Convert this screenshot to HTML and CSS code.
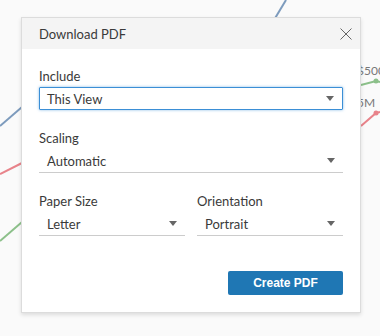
FILE: index.html
```html
<!DOCTYPE html>
<html lang="en">
<head>
    <meta charset="UTF-8">
    <meta name="viewport" content="width=device-width, initial-scale=1.0">
    <title>Download PDF</title>
    <link rel="stylesheet" href="styles.css">
</head>
<body>
    <!-- chart behind the dialog -->
    <svg class="chart" width="380" height="336" viewBox="0 0 380 336">
        <polyline points="286,0 274,20" stroke="#7d9bbd" stroke-width="2" fill="none"/>
        <polyline points="0,126 22,107" stroke="#7d9bbd" stroke-width="2" fill="none"/>
        <polyline points="0,174 22,163" stroke="#e8838a" stroke-width="2" fill="none"/>
        <polyline points="0,241 22,222" stroke="#8cc08a" stroke-width="2" fill="none"/>
        <polyline points="361,85 376,81 380,82" stroke="#8cc08a" stroke-width="2" fill="none"/>
        <circle cx="376" cy="81" r="2.5" fill="#8cc08a"/>
        <polyline points="361,126 376,113 380,112" stroke="#e8838a" stroke-width="2" fill="none"/>
        <circle cx="376" cy="113" r="2.5" fill="#e8838a"/>
        <text x="357" y="75" class="chart-label">$500</text>
        <text x="357" y="107" class="chart-label">5M</text>
    </svg>

    <div class="dialog">
        <div class="dialog-header">
            <span class="dialog-title">Download PDF</span>
            <svg class="close" width="12" height="12" viewBox="0 0 12 12">
                <path d="M0.5 0.5 L11.5 11.5 M11.5 0.5 L0.5 11.5" stroke="#666" stroke-width="1" fill="none"/>
            </svg>
        </div>
        <div class="dialog-body">
            <div class="field">
                <label>Include</label>
                <div class="select boxed">
                    <span>This View</span>
                    <span class="arrow"></span>
                </div>
            </div>
            <div class="field">
                <label>Scaling</label>
                <div class="select">
                    <span>Automatic</span>
                    <span class="arrow"></span>
                </div>
            </div>
            <div class="field-row">
                <div class="field">
                    <label>Paper Size</label>
                    <div class="select">
                        <span>Letter</span>
                        <span class="arrow"></span>
                    </div>
                </div>
                <div class="field">
                    <label>Orientation</label>
                    <div class="select">
                        <span>Portrait</span>
                        <span class="arrow"></span>
                    </div>
                </div>
            </div>
            <div class="actions">
                <button class="create-btn">Create PDF</button>
            </div>
        </div>
    </div>
</body>
</html>
```

FILE: styles.css
```css
body {
    margin: 0;
    width: 380px;
    height: 336px;
    background-color: #fafafa;
    font-family: 'Lato', 'Liberation Sans', sans-serif;
    color: #3a3a3a;
    position: relative;
    overflow: hidden;
}
.chart {
    position: absolute;
    left: 0;
    top: 0;
}
.chart-label {
    font-family: 'Lato', sans-serif;
    font-size: 12px;
    fill: #777;
}
.dialog {
    position: relative;
    margin: 17px 0 0 21px;
    width: 338px;
    background-color: white;
    border: 1px solid #dcdcdc;
    box-shadow: 0 2px 4px rgba(0,0,0,0.12);
}
.dialog-header {
    height: 31px;
    background-color: #f4f4f4;
    display: flex;
    align-items: center;
    justify-content: space-between;
    padding: 0 8px 0 17px;
}
.dialog-title {
    font-size: 13px;
}
.close {
    display: block;
}
.dialog-body {
    padding: 19px 17px 17px 17px;
}
.field {
    margin-bottom: 20px;
}
.field label {
    display: block;
    font-size: 13px;
    margin-bottom: 3px;
}
.select {
    height: 23px;
    display: flex;
    align-items: center;
    justify-content: space-between;
    padding: 0 8px 0 8px;
    font-size: 13px;
    border-bottom: 1px solid #ccc;
}
.select.boxed {
    border: 1px solid #3b8fd6;
    border-radius: 1px;
    box-shadow: 0 0 3px rgba(59,143,214,0.6);
    padding: 0 8px 0 7px;
    height: 21px;
}
.arrow {
    width: 0;
    height: 0;
    border-left: 4px solid transparent;
    border-right: 4px solid transparent;
    border-top: 5px solid #666;
}
.field-row {
    display: grid;
    grid-template-columns: 1fr 1fr;
    gap: 12px;
}
.actions {
    display: flex;
    justify-content: flex-end;
    margin-top: 15px;
}
.create-btn {
    width: 115px;
    height: 24px;
    background-color: #1f77b4;
    color: white;
    border: none;
    border-radius: 2px;
    font-family: 'Liberation Sans', sans-serif;
    font-weight: bold;
    font-size: 12px;
    cursor: pointer;
}
```
